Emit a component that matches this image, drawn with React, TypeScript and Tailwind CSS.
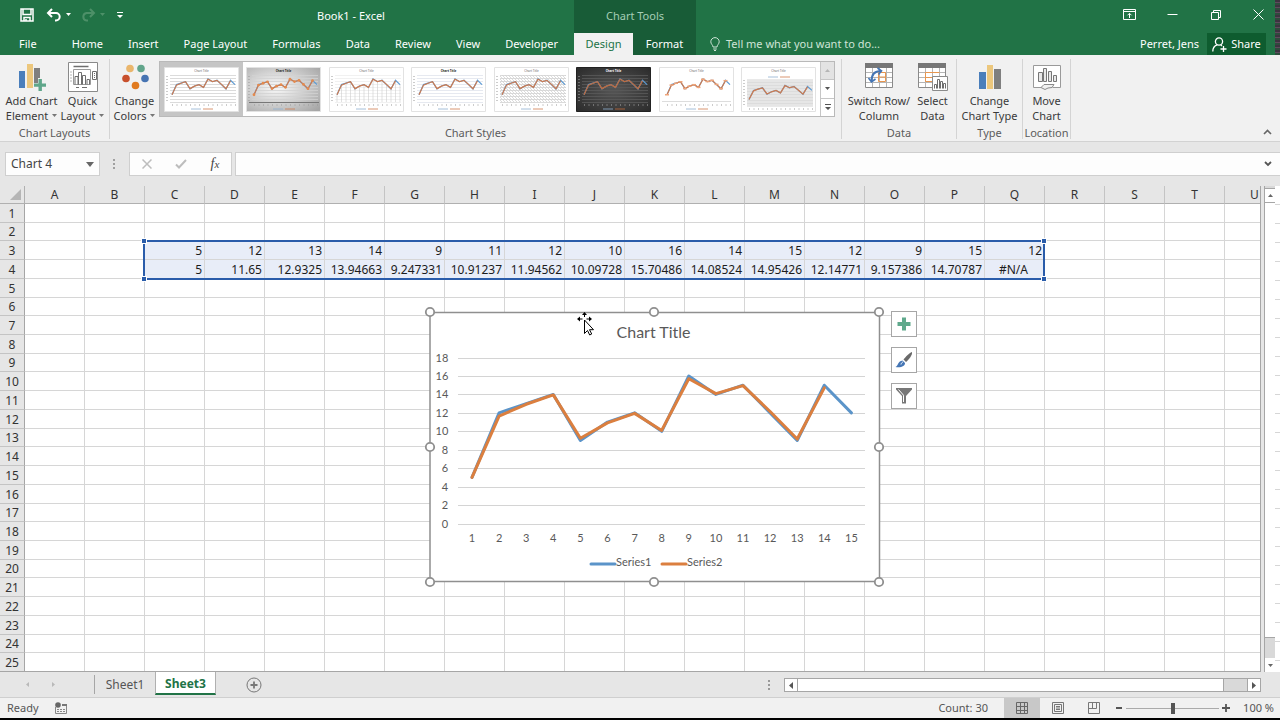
import { useState } from 'react'
import type { ReactNode } from 'react'

const columns = 'ABCDEFGHIJKLMNOPQRSTU'.split('')
const rows = Array.from({ length: 25 }, (_, i) => i + 1)

const tabs = ['Home', 'Insert', 'Page Layout', 'Formulas', 'Data', 'Review', 'View', 'Developer']

// values start in column C
const cells: Record<number, string[]> = {
  3: ['5', '12', '13', '14', '9', '11', '12', '10', '16', '14', '15', '12', '9', '15', '12'],
  4: ['5', '11.65', '12.9325', '13.94663', '9.247331', '10.91237', '11.94562', '10.09728', '15.70486', '14.08524', '14.95426', '12.14771', '9.157386', '14.70787', '#N/A'],
}

const series1 = cells[3].map(Number)
const series2 = cells[4].slice(0, 14).map(Number)

function toPoints(values: number[], x0: number, step: number, y0: number, unit: number) {
  return values.map((v, i) => `${x0 + i * step},${y0 - v * unit}`).join(' ')
}

function Caret({ className = '' }: { className?: string }) {
  return (
    <svg className={`inline-block shrink-0 ${className}`} width="5" height="3" viewBox="0 0 5 3">
      <path d="M0 0h5L2.5 3z" fill="currentColor" />
    </svg>
  )
}

/* ---------- Header ---------- */

function QuickAccess() {
  return (
    <div className="flex w-32 items-center pl-5 text-white">
      <button aria-label="Save">
        <svg width="14" height="14" viewBox="0 0 14 14" fill="none" stroke="currentColor" strokeWidth="1.5">
          <path d="M1 1h12v12H1z" />
          <path d="M3 1v5.500h8V1M4 13V9.500h6V13" />
          <path d="M6 11v2" />
        </svg>
      </button>
      <button aria-label="Undo" className="ml-3 flex items-center gap-1">
        <svg width="16" height="14" viewBox="0 0 16 14" fill="none" stroke="currentColor" strokeWidth="2">
          <path d="M2 5h8a3.700 3.700 0 0 1 0 7.400H9" />
          <path d="M6 1L2 5l4 4" />
        </svg>
        <Caret />
      </button>
      <button aria-label="Redo" className="ml-2.5 flex items-center gap-1 text-[#4d9068]">
        <svg width="15" height="14" viewBox="0 0 15 14" fill="none" stroke="currentColor" strokeWidth="2">
          <path d="M13 5H5.500a3.800 3.800 0 0 0 0 7.500H7" />
          <path d="M9 1l4 4-4 4" />
        </svg>
        <Caret />
      </button>
      <button aria-label="Customize Quick Access Toolbar" className="ml-3">
        <svg width="6" height="6" viewBox="0 0 6 6">
          <path d="M0 0h6v1H0zM0 3h6L3 6z" fill="currentColor" />
        </svg>
      </button>
    </div>
  )
}

function WindowButtons() {
  return (
    <div className="flex h-[33px] items-center justify-end gap-[30px] pr-2.5 pb-1 text-white">
      <button aria-label="Ribbon Display Options">
        <svg width="13" height="11" viewBox="0 0 13 11" fill="none" stroke="currentColor">
          <path d="M.5 .5h12v10H.5zM.5 2.500h12M6.500 9V4.500M4.500 6.300l2-2 2 2" />
        </svg>
      </button>
      <button aria-label="Minimize">
        <svg width="13" height="11" viewBox="0 0 13 11" stroke="currentColor">
          <path d="M1.500 5.500h10" />
        </svg>
      </button>
      <button aria-label="Restore">
        <svg width="13" height="11" viewBox="0 0 13 11" fill="none" stroke="currentColor">
          <path d="M2.500 3.500h7v7h-7zM4.500 3.500v-2h7v7h-2" />
        </svg>
      </button>
      <button aria-label="Close">
        <svg width="13" height="11" viewBox="0 0 13 11" stroke="currentColor">
          <path d="M1.500 .5l10 10M11.500 .5l-10 10" />
        </svg>
      </button>
    </div>
  )
}

function Header() {
  return (
    <header className="flex h-[55px] shrink-0 bg-[#217346] text-[11px] text-white">
      <div className="flex w-[574px] flex-col">
        <div className="flex h-[33px] items-stretch pb-1">
          <QuickAccess />
          <h1 className="flex flex-1 items-center justify-center pt-1">Book1 - Excel</h1>
        </div>
        <nav className="flex flex-1 items-center justify-between pr-4 pl-[19px]">
          <button className="mr-2.5">File</button>
          {tabs.map((t) => (
            <button key={t}>{t}</button>
          ))}
        </nav>
      </div>
      <div className="flex w-[122px] flex-col bg-[#185c37]">
        <div className="flex h-[33px] items-center justify-center text-[#a5cdb5]">Chart Tools</div>
        <div className="flex flex-1">
          <button className="w-[59px] bg-[#f1f1f1] text-[#217346]">Design</button>
          <button className="flex-1">Format</button>
        </div>
      </div>
      <div className="flex flex-1 flex-col">
        <WindowButtons />
        <div className="flex flex-1 items-stretch pr-[9px] pl-[14px]">
          <button className="flex items-center gap-[6px] text-[#cfe4d7]">
            <svg width="10" height="14" viewBox="0 0 10 14" fill="none" stroke="currentColor">
              <path d="M3 10C3 8 .8 7 .8 4.800a4.200 4.200 0 0 1 8.400 0C9.200 7 7 8 7 10zM3.200 12h3.600M4 13.500h2" />
            </svg>
            Tell me what you want to do...
          </button>
          <button className="mr-2 ml-auto">Perret, Jens</button>
          <button className="flex w-[59px] items-center justify-center gap-1 bg-[#0e5c2f]">
            <svg width="15" height="15" viewBox="0 0 15 15" fill="none" stroke="currentColor" strokeWidth="1.300">
              <circle cx="7" cy="4.500" r="3.600" />
              <path d="M.8 14.500c0-3.500 2-5.800 4.400-6.600M8.800 8l1.200 1M11.500 9v6M8.500 12h6" />
            </svg>
            Share
          </button>
        </div>
      </div>
      <div className="w-[5px] bg-[repeating-linear-gradient(#3c3340_0_2px,#5e4a5c_2px_3px,#2f4b3d_3px_5px)]" />
    </header>
  )
}

/* ---------- Ribbon ---------- */

function RibbonGroup({ label, className = '', children }: { label: string; className?: string; children: ReactNode }) {
  return (
    <section className={`flex flex-col border-r border-[#d4d4d4] ${className}`}>
      <div className="flex flex-1 justify-center">{children}</div>
      <div className="text-center text-[11px] leading-[12px] text-[#5c5c5c]">{label}</div>
    </section>
  )
}

function RibbonButton({ lines, caret, className = '', children }: { lines: [string, string]; caret?: boolean; className?: string; children: ReactNode }) {
  return (
    <button className={`flex flex-col items-center text-[11px] leading-[15px] whitespace-nowrap text-[#3a3a3a] ${className}`}>
      <span className="mt-0.5 flex h-8 items-center">{children}</span>
      <span>{lines[0]}</span>
      <span className="flex items-center gap-1">
        {lines[1]}
        {caret && <Caret className="text-[#777]" />}
      </span>
    </button>
  )
}

function AddElementIcon() {
  return (
    <svg width="28" height="28" viewBox="0 0 28 28">
      <path d="M1 8h6v17H1z" fill="#4a7ebb" />
      <path d="M9 1h6v24H9z" fill="#ecc77d" />
      <path d="M16 5h6v20h-6z" fill="#7f7f7f" />
      <path d="M15 20h5v-5h5v5h5v5h-5v4h-5v-4h-5z" fill="#f1f1f1" />
      <path d="M16 20.500h4.500V16h3.400v4.500H28v3.200h-4.100V28h-3.400v-4.300H16z" fill="#5fa68a" />
    </svg>
  )
}

function QuickLayoutIcon() {
  return (
    <svg width="30" height="30" viewBox="0 0 30 30" fill="none" stroke="#6e6e6e">
      <path d="M.5 .5h29v29H.5z" fill="#fff" stroke="#8a8a8a" />
      <path d="M5.500 4.500h15" strokeWidth="1.500" />
      <path d="M5.500 7.500h17v15h-17z" stroke="#9a9a9a" />
      <path d="M7 22.500v-8h3v8M10.500 22.500v-12h3v12M14.500 22.500v-9h3v9M19 22.500v-5h2.500v5" />
      <path d="M24.500 9.500h4v8h-4zM26.500 11v1M26.500 13v1M26.500 15v1" />
      <path d="M2.500 10h1M2.500 13h1M2.500 16h1M2.500 19h1M8 25.500h3M14 25.500h5" />
    </svg>
  )
}

function ColorsIcon() {
  return (
    <svg width="28" height="26" viewBox="0 0 28 26">
      <circle cx="9" cy="4.500" r="3.800" fill="#eab66c" />
      <circle cx="20" cy="4.500" r="3.800" fill="#62a58b" />
      <circle cx="5" cy="14.500" r="3.800" fill="#c8502d" />
      <circle cx="24" cy="14.500" r="3.800" fill="#4674b2" />
      <circle cx="14.500" cy="21.500" r="3.800" fill="#e07a1f" />
    </svg>
  )
}

function TableBase() {
  return (
    <>
      <path d="M.5 .5h27v24H.5z" fill="#fff" stroke="#8a8a8a" />
      <path d="M0 0h28v5H0z" fill="#777" />
      <path d="M1 9.500h26M1 14.500h26M1 19.500h26M7.500 5v19M14.500 5v19M21.500 5v19" stroke="#b5b5b5" fill="none" />
    </>
  )
}

function SwitchIcon() {
  return (
    <svg width="28" height="28" viewBox="0 0 28 28" fill="none">
      <TableBase />
      <path d="M13.500 9.500h7v9h-7zM13.500 14h7" stroke="#e8964f" />
      <path d="M6.500 18C6.500 11 10 8 16 8" stroke="#4576b5" strokeWidth="2" />
      <path d="M12.500 5l4 3-3 3.500M3.500 15l3 4 4-3" stroke="#4576b5" strokeWidth="1.600" />
    </svg>
  )
}

function SelectDataIcon() {
  return (
    <svg width="30" height="28" viewBox="0 0 30 28" fill="none">
      <TableBase />
      <path d="M7.500 9.500h14M7.500 14.500h7M7.500 9.500v9h7" stroke="#e8964f" />
      <path d="M14.500 13.500h15v14h-15z" fill="#fff" stroke="#8a8a8a" />
      <path d="M16.500 25.500v-4h2v4M19.500 25.500v-9h2v9M22.500 25.500v-7h2v7M25.500 25.500v-5h2v5" stroke="#6e6e6e" />
    </svg>
  )
}

function ChartTypeIcon() {
  return (
    <svg width="22" height="26" viewBox="0 0 22 26">
      <path d="M0 8h7v17H0z" fill="#4a7ebb" />
      <path d="M8 1h6v24H8z" fill="#ecc77d" />
      <path d="M15 5h7v20h-7z" fill="#7f7f7f" />
    </svg>
  )
}

function MoveChartIcon() {
  return (
    <svg width="28" height="26" viewBox="0 0 28 26" fill="none" stroke="#9a9a9a">
      <path d="M8 23.500H.5V1.500h27v22h-8" fill="#fff" />
      <path d="M5.500 17.500v-9h4v9zM10.500 17.500v-13h3v13zM15.500 17.500v-10h3v10zM20.500 17.500v-6h3v6z" stroke="#777" fill="#e8e8e8" />
      <path d="M8 23.500l3-3h10l-2 3-4 .5-3 1.500z" fill="#f1f1f1" stroke="#8a8a8a" />
    </svg>
  )
}

type Thumb = 'plain' | 'gradient' | 'drops' | 'bold' | 'hatch' | 'dark' | 'nogrid' | 'shaded'
const thumbs: Thumb[] = ['plain', 'gradient', 'drops', 'bold', 'hatch', 'dark', 'nogrid', 'shaded']

function StyleThumb({ kind }: { kind: Thumb }) {
  const dark = kind === 'dark'
  const shift = kind === 'shaded' ? 4 : 0
  const bg = dark ? 'url(#thumbDark)' : kind === 'gradient' ? 'url(#thumbGrad)' : '#fff'
  const line = dark ? '#c0693a' : '#cf7b4f'
  const ink = dark ? '#aaa' : '#999'
  const grid = dark ? '#5a5a5a' : kind === 'bold' ? '#dfe3ec' : kind === 'drops' ? '#eee' : '#d2d2d2'
  const base = 35 + shift
  const unit = kind === 'shaded' ? 1.3 : 1.45
  const legendY = kind === 'shaded' ? 10 : 42
  return (
    <svg width="75" height="45" viewBox="0 0 75 45" fill="none">
      <defs>
        <radialGradient id="thumbGrad" cx=".4" cy=".45" r=".75">
          <stop offset=".1" stopColor="#f2f2f2" />
          <stop offset="1" stopColor="#a6a6a6" />
        </radialGradient>
        <radialGradient id="thumbDark" cx=".5" cy=".5" r=".7">
          <stop offset=".1" stopColor="#525252" />
          <stop offset="1" stopColor="#2b2b2b" />
        </radialGradient>
        <pattern id="thumbHatch" width="3" height="3" patternUnits="userSpaceOnUse">
          <path d="M0 0l3 3" stroke="#c4c4c4" strokeWidth=".6" />
        </pattern>
      </defs>
      <path d="M.5 .5h74v44H.5z" fill={bg} stroke={dark ? '#222' : '#e2e2e2'} />
      {kind === 'hatch' && <path d="M6 8h66v27H6z" fill="url(#thumbHatch)" />}
      {kind === 'shaded' && <path d="M6 13h66v26H6z" fill="#e6e6e6" />}
      <text
        x="37.500"
        y="5.300"
        fontSize="3"
        textAnchor="middle"
        fill={dark ? '#fff' : kind === 'bold' || kind === 'gradient' ? '#222' : '#666'}
        fontWeight={dark || kind === 'bold' || kind === 'gradient' ? 700 : 400}
      >
        Chart Title
      </text>
      {kind !== 'nogrid' &&
        Array.from({ length: 10 }, (_, i) => (
          <path key={i} d={`M6 ${base + 0.5 - i * 3}h66`} stroke={grid} strokeWidth={kind === 'shaded' ? 0.5 : 0.8} />
        ))}
      {kind === 'gradient' && <path d="M3 35.500h70" stroke="#777" />}
      {kind === 'nogrid' && <path d="M3 34.500h69" stroke="#ddd" />}
      {kind === 'drops' &&
        series1.map((v, i) => <path key={i} d={`M${8 + i * 4.5} ${base}V${base - v * unit}`} stroke="#ccc" strokeWidth=".6" />)}
      {kind !== 'nogrid' && <path d={`M3 ${9 + shift}V${base + 1}`} stroke={ink} strokeWidth="1" strokeDasharray="1 2" />}
      <path d={`M8 ${base + 3}h64`} stroke={ink} strokeWidth="1" strokeDasharray="1 3.500" />
      <path d={`M27 ${legendY}h10`} stroke="#8fb0d0" strokeWidth=".8" />
      <path d={`M39 ${legendY}h10`} stroke={line} strokeWidth=".8" />
      <polyline points={toPoints(series1, 8, 4.5, base, unit)} stroke="#5b9bd5" strokeWidth="1.200" />
      <polyline points={toPoints(series2, 8, 4.5, base, unit)} stroke={line} strokeWidth="1.200" />
      {kind === 'gradient' &&
        series2.map((v, i) => <circle key={i} cx={8 + i * 4.5} cy={base - v * unit} r="1.400" fill="#e58a4d" />)}
      {kind === 'nogrid' &&
        series2.map((v, i) => <path key={i} d={`M${6 + i * 4.5} ${base - v * unit}h4`} stroke="#eea57b" strokeWidth="1.500" />)}
    </svg>
  )
}

function Gallery() {
  const [selected, setSelected] = useState<Thumb>('plain')
  return (
    <div className="mt-0.5 flex h-14 border border-[#b9b9b9] bg-white">
      <div className="flex flex-1">
        {thumbs.map((t) => (
          <button
            key={t}
            aria-label={`Style ${t}`}
            onClick={() => setSelected(t)}
            className={`flex flex-1 items-center justify-center ${t === selected ? 'bg-[#c5c5c5]' : ''}`}
          >
            <StyleThumb kind={t} />
          </button>
        ))}
      </div>
      <div className="flex w-3.5 flex-col border-l border-[#c6c6c6] text-[#555]">
        <button aria-label="Previous styles" className="flex flex-1 items-center justify-center bg-[#e3e3e3] text-[#b5b5b5]">
          <Caret className="rotate-180" />
        </button>
        <button aria-label="Next styles" className="flex flex-1 items-center justify-center border-t border-[#c6c6c6]">
          <Caret />
        </button>
        <button aria-label="More styles" className="flex flex-1 items-center justify-center border-t border-[#c6c6c6]">
          <svg width="6" height="6" viewBox="0 0 6 6">
            <path d="M0 0h6v1H0zM0 3h6L3 6z" fill="currentColor" />
          </svg>
        </button>
      </div>
    </div>
  )
}

function Ribbon() {
  return (
    <div className="flex h-[87px] shrink-0 border-b border-[#d2d2d2] bg-[#f1f1f1] pt-1 pb-0.5">
      <RibbonGroup label="Chart Layouts" className="w-[110px]">
        <RibbonButton lines={['Add Chart', 'Element']} caret className="w-[56px]">
          <AddElementIcon />
        </RibbonButton>
        <RibbonButton lines={['Quick', 'Layout']} caret className="w-[46px]">
          <QuickLayoutIcon />
        </RibbonButton>
      </RibbonGroup>
      <RibbonGroup label="Chart Styles" className="w-[732px]">
        <RibbonButton lines={['Change', 'Colors']} caret className="w-[49px]">
          <ColorsIcon />
        </RibbonButton>
        <div className="flex-1 pr-1.5">
          <Gallery />
        </div>
      </RibbonGroup>
      <RibbonGroup label="Data" className="w-[115px]">
        <RibbonButton lines={['Switch Row/', 'Column']} className="w-[67px]">
          <SwitchIcon />
        </RibbonButton>
        <RibbonButton lines={['Select', 'Data']} className="w-[40px]">
          <SelectDataIcon />
        </RibbonButton>
      </RibbonGroup>
      <RibbonGroup label="Type" className="w-[66px]">
        <RibbonButton lines={['Change', 'Chart Type']}>
          <ChartTypeIcon />
        </RibbonButton>
      </RibbonGroup>
      <RibbonGroup label="Location" className="w-[48px]">
        <RibbonButton lines={['Move', 'Chart']}>
          <MoveChartIcon />
        </RibbonButton>
      </RibbonGroup>
      <button aria-label="Collapse the Ribbon" className="mr-2 ml-auto self-end pb-1">
        <svg width="9" height="6" viewBox="0 0 9 6" fill="none" stroke="#666" strokeWidth="1.600">
          <path d="M1 5l3.500-3.500L8 5" />
        </svg>
      </button>
    </div>
  )
}

/* ---------- Formula bar ---------- */

function FormulaBar() {
  return (
    <div className="flex h-11 shrink-0 items-center bg-[#e6e6e6] pl-[5px]">
      <div className="flex h-6 w-[95px] items-center border border-[#cfcfcf] bg-[#fdfdfd] pr-[5px] pl-[5px]">
        <input aria-label="Name Box" defaultValue="Chart 4" className="w-0 flex-1 bg-transparent text-[12px] text-[#444] outline-none" />
        <button aria-label="Name Box list" className="flex text-[#666]">
          <svg width="8" height="5" viewBox="0 0 8 5">
            <path d="M0 0h8L4 5z" fill="currentColor" />
          </svg>
        </button>
      </div>
      <svg className="mx-[13px]" width="3" height="12" viewBox="0 0 3 12" fill="#a0a0a0">
        <path d="M0 1h2v2H0zM0 5h2v2H0zM0 9h2v2H0z" />
      </svg>
      <div className="flex h-6 w-[103px] items-center justify-around border border-[#cfcfcf] bg-[#fdfdfd]">
        <button aria-label="Cancel">
          <svg width="10" height="10" viewBox="0 0 10 10" stroke="#bdbdbd" strokeWidth="1.500">
            <path d="M.5 .5l9 9M9.500 .5l-9 9" />
          </svg>
        </button>
        <button aria-label="Enter">
          <svg width="12" height="10" viewBox="0 0 12 10" fill="none" stroke="#bdbdbd" strokeWidth="2">
            <path d="M1 5.500L4 8.500 11 1" />
          </svg>
        </button>
        <button aria-label="Insert Function" className="font-['Liberation_Serif',serif] text-[14px] leading-none text-[#444] italic">
          f<span className="text-[11px]">x</span>
        </button>
      </div>
      <div className="ml-[3px] flex h-6 flex-1 items-center border border-r-0 border-[#cfcfcf] bg-[#fdfdfd] pr-2">
        <input aria-label="Formula Bar" className="min-w-0 flex-1 bg-transparent px-1 outline-none" />
        <button aria-label="Expand Formula Bar">
          <svg width="8" height="6" viewBox="0 0 8 6" fill="none" stroke="#555" strokeWidth="1.800">
            <path d="M1 1l3 3 3-3" />
          </svg>
        </button>
      </div>
    </div>
  )
}

/* ---------- Worksheet ---------- */

function Grid() {
  return (
    <table className="h-[calc(100%+1px)] w-[1285px] table-fixed border-separate border-spacing-0 font-['Noto_Sans',sans-serif] text-[12px] leading-4">
      <colgroup>
        <col className="w-[25px]" />
        {columns.map((c) => (
          <col key={c} className="w-[60px]" />
        ))}
      </colgroup>
      <thead>
        <tr className="h-[18px] bg-[#e6e6e6] text-[#333]">
          <th className="border-r border-b border-[#b0b0b0] p-0">
            <svg className="ml-2.5 block" width="11" height="11" viewBox="0 0 11 11">
              <path d="M11 0v11H0z" fill="#b5b5b5" />
            </svg>
          </th>
          {columns.map((c) => (
            <th key={c} className="border-r border-b border-[#b0b0b0] border-r-[#c4c4c4] p-0 font-normal">
              {c}
            </th>
          ))}
        </tr>
      </thead>
      <tbody>
        {rows.map((r) => (
          <tr key={r} className="align-bottom">
            <th className="border-r border-b border-[#c4c4c4] border-r-[#a6a6a6] bg-[#e6e6e6] p-0 font-normal text-[#333]">{r}</th>
            {columns.map((c, i) => {
              const value = cells[r]?.[i - 2]
              return (
                <td
                  key={c}
                  className={`border-r border-b border-[#d6d6d6] p-0 pr-0.5 text-[#1c1c1c] ${value ? 'bg-[#e8edf8]' : 'bg-white'} ${value === '#N/A' ? 'text-center' : 'text-right'}`}
                >
                  {value}
                </td>
              )
            })}
          </tr>
        ))}
      </tbody>
    </table>
  )
}

function SelectionFrame() {
  return (
    <div className="pointer-events-none absolute top-[54px] left-[143px] h-10 w-[902px] border-2 border-[#2a5caa]">
      <i className="absolute -top-1 -left-1 size-[6px] border border-white bg-[#2a5caa]" />
      <i className="absolute -top-1 -right-1 size-[6px] border border-white bg-[#2a5caa]" />
      <i className="absolute -bottom-1 -left-1 size-[6px] border border-white bg-[#2a5caa]" />
      <i className="absolute -right-1 -bottom-1 size-[6px] border border-white bg-[#2a5caa]" />
    </div>
  )
}

function ChartObject() {
  const base = 211.5
  const unit = 9.22
  return (
    <div className="absolute top-[118px] left-[422px] flex gap-1">
      {/* 8px margin round the frame leaves room for the handles */}
      <svg width="465" height="286" viewBox="-8 -8 465 286" fill="none" fontSize="11">
        <path d="M0 .5h449.500v269H0z" fill="#fff" stroke="#8f8f8f" strokeWidth="1.500" />
        <text x="223.500" y="26" fontSize="16" textAnchor="middle" fill="#595959">
          Chart Title
        </text>
        {Array.from({ length: 10 }, (_, i) => {
          const y = Math.round(base - i * 2 * unit)
          return (
            <g key={i}>
              <path d={`M28 ${y + 0.5}H435`} stroke="#d4d4d4" />
              <text x={i > 4 ? 12 : 15} textAnchor="middle" y={y + 4} fill="#595959">
                {i * 2}
              </text>
            </g>
          )
        })}
        {series1.map((_, i) => (
          <text key={i} x={42 + i * 27.1} y="230" textAnchor="middle" fill="#595959">
            {i + 1}
          </text>
        ))}
        <g strokeWidth="3" strokeLinecap="round" strokeLinejoin="round">
          <polyline points={toPoints(series1, 42, 27.1, base, unit)} stroke="#5b94c9" />
          <polyline points={toPoints(series2, 42, 27.1, base, unit)} stroke="#db7f3f" />
          <path d="M161 252h24" stroke="#5b94c9" />
          <path d="M232 252h24" stroke="#db7f3f" />
        </g>
        <text x="186" y="254" fill="#595959">Series1</text>
        <text x="257" y="254" fill="#595959">Series2</text>
        {[0, 135, 270].map((y) =>
          [0, 224, 449].map((x) =>
            x === 224 && y === 135 ? null : <circle key={`${x}-${y}`} cx={x} cy={y} r="4.200" fill="#fff" stroke="#8f8f8f" strokeWidth="1.800" />,
          ),
        )}
        {/* move pointer */}
        <g transform="translate(147 0)">
          <path d="M7.500 1v12M1 7h14" stroke="#fff" strokeWidth="2" />
          <path d="M7.500 0L5 3h2v2h1V3h2zM0 7l3-2.500V6.500h2.500v1H3v2zM15 7l-3-2.500V6.500h-2.500v1H12v2z" fill="#000" />
          <path d="M7.500 8v13.500l3-3 2.200 4.500 2-1-2.200-4.300h4z" fill="#fff" stroke="#000" />
        </g>
      </svg>
      <div className="mt-[7px] flex flex-col gap-2.5">
        <button aria-label="Chart Elements" className="flex size-[26px] items-center justify-center border border-[#a6a6a6] bg-white">
          <svg width="14" height="14" viewBox="0 0 14 14">
            <path d="M5 .5h4V5h4.500v4H9v4.500H5V9H.5V5H5z" fill="#5fa98c" />
          </svg>
        </button>
        <button aria-label="Chart Styles" className="flex size-[26px] items-center justify-center border border-[#a6a6a6] bg-white">
          <svg width="18" height="18" viewBox="0 0 18 18">
            <path d="M17 1c.6 3-3 7.500-6 10L8.500 8.500C10.500 6 14 2 17 1z" fill="#6a6a6a" />
            <path d="M7.500 9.500L10 12c.2 3-4 5-9.500 4C3 15 3 10 7.500 9.500z" fill="#4576b5" />
            <path d="M6 13.500c.3-1.500 1.200-2.300 2-2.500" stroke="#fff" fill="none" />
          </svg>
        </button>
        <button aria-label="Chart Filters" className="flex size-[26px] items-center justify-center border border-[#a6a6a6] bg-white">
          <svg width="18" height="16" viewBox="0 0 18 16">
            <path d="M1 0h16v1.500L11 8v7.500H7V8L1 1.500z" fill="#777" />
            <path d="M3.500 1.500L8.500 7.200V14" stroke="#fff" fill="none" />
          </svg>
        </button>
      </div>
    </div>
  )
}

function Sheet() {
  return (
    <main className="flex min-h-0 flex-1 bg-[#e6e6e6] font-[Lato,sans-serif]">
      <div className="relative min-w-0 flex-1 overflow-hidden border-r border-b border-[#a6a6a6]">
        <Grid />
        <SelectionFrame />
        <ChartObject />
      </div>
      <div className="ml-[3px] flex w-[11px] flex-col border-l border-[#a6a6a6] bg-[#d9d9d9] pt-0.5">
        <button aria-label="Scroll up" className="flex h-[15px] items-center justify-center border-y border-[#a6a6a6] bg-white text-[#666]">
          <Caret className="rotate-180" />
        </button>
        <div className="flex-1 border-b border-[#a6a6a6] bg-white" />
        <div className="h-5" />
        <button aria-label="Scroll down" className="flex h-[14px] items-center justify-center bg-white text-[#666]">
          <Caret />
        </button>
      </div>
      <div className="w-[5px] bg-[repeating-linear-gradient(#fff_0_18px,#d6d6d6_18px_19px)]" />
    </main>
  )
}

/* ---------- Footer ---------- */

function SheetTabs() {
  return (
    <div className="flex h-[26px] shrink-0 border-b border-[#cfcfcf] bg-[#e6e6e6] text-[12px] text-[#555]">
      <div className="my-[3px] flex w-[95px] items-center border-r border-[#a6a6a6] pl-[25px] text-[#b9b9b9]">
        <button aria-label="Previous sheet" className="flex w-[26px]">
          <Caret className="rotate-90" />
        </button>
        <button aria-label="Next sheet" className="flex">
          <Caret className="-rotate-90" />
        </button>
      </div>
      <button className="w-[60px]">Sheet1</button>
      <button className="-mt-px mb-0.5 w-[61px] border-x border-b-2 border-x-[#b0b0b0] border-b-[#217346] bg-white pt-1 font-bold text-[#217346]">
        Sheet3
      </button>
      <button aria-label="New sheet" className="ml-[30px]">
        <svg width="16" height="16" viewBox="0 0 16 16" fill="none" stroke="#777">
          <circle cx="8" cy="8" r="7" />
          <path d="M8 4.500v7M4.500 8h7" strokeWidth="1.800" />
        </svg>
      </button>
      <div className="ml-auto flex w-[512px] items-center pt-px">
        <svg width="3" height="11" viewBox="0 0 3 11" fill="#999">
          <path d="M0 0h2v2H0zM0 4h2v2H0zM0 8h2v2H0z" />
        </svg>
        <div className="mr-[19px] ml-[13px] flex h-3.5 flex-1 border border-[#a6a6a6] bg-[#d9d9d9] text-[#555]">
          <button aria-label="Scroll left" className="flex w-[13px] items-center justify-center border-r border-[#a6a6a6] bg-white">
            <svg width="4" height="7" viewBox="0 0 4 7">
              <path d="M4 0v7L0 3.500z" fill="currentColor" />
            </svg>
          </button>
          <div className="flex-1 border-r border-[#a6a6a6] bg-white" />
          <div className="w-[23px]" />
          <button aria-label="Scroll right" className="flex w-[13px] items-center justify-center border-l border-[#a6a6a6] bg-white">
            <svg width="4" height="7" viewBox="0 0 4 7">
              <path d="M0 0v7l4-3.500z" fill="currentColor" />
            </svg>
          </button>
        </div>
      </div>
    </div>
  )
}

function StatusBar() {
  const [zoom, setZoom] = useState(100)
  return (
    <footer className="flex h-[22px] shrink-0 items-stretch border-b-2 border-black bg-[#f1f1f1] text-[11px] text-[#555]">
      <span className="flex items-center pl-[7px]">Ready</span>
      <button aria-label="Macro recording" className="ml-4">
        <svg width="12" height="12" viewBox="0 0 12 12" fill="none">
          <path d="M.5 5v6.500h11v-9H7" stroke="#888" />
          <path d="M7 2h5v2H7z" fill="#777" />
          <path d="M2 7.500h8M2 9.500h8" stroke="#888" strokeDasharray="2 1" />
          <circle cx="3" cy="3" r="2.800" fill="#666" />
        </svg>
      </button>
      <span className="mr-4 ml-auto flex items-center">Count: 30</span>
      <button aria-label="Normal" className="flex w-9 items-center justify-center bg-[#c8c8c8]">
        <svg width="12" height="12" viewBox="0 0 12 12" fill="none" stroke="#666">
          <path d="M.5 .5h11v11H.5zM.5 4.500h11M.5 8.500h11M4.500 .5v11M8.500 .5v11" />
        </svg>
      </button>
      <button aria-label="Page Layout view" className="flex w-9 items-center justify-center">
        <svg width="12" height="12" viewBox="0 0 12 12" fill="none" stroke="#777">
          <path d="M.5 .5h11v11H.5zM2.500 2.500h7v7h-7zM4 4.500h4M4 6h4M4 7.500h4" />
        </svg>
      </button>
      <button aria-label="Page Break Preview" className="flex w-9 items-center justify-center">
        <svg width="12" height="12" viewBox="0 0 12 12" fill="none" stroke="#777">
          <path d="M.5 .5h11v11H.5zM4.500 .5v6M8.500 .5v6h-8" />
        </svg>
      </button>
      <button aria-label="Zoom out" className="ml-[3px] flex items-center">
        <svg width="8" height="8" viewBox="0 0 8 8" stroke="#555" strokeWidth="2">
          <path d="M1 4h6" />
        </svg>
      </button>
      <input
        type="range"
        aria-label="Zoom"
        min={0}
        max={200}
        value={zoom}
        onChange={(e) => setZoom(Number(e.target.value))}
        className="mx-[3px] h-full w-[93px] appearance-none bg-[linear-gradient(#aaa,#aaa)] bg-[length:100%_1px] bg-center bg-no-repeat [&::-webkit-slider-thumb]:h-[11px] [&::-webkit-slider-thumb]:w-1 [&::-webkit-slider-thumb]:appearance-none [&::-webkit-slider-thumb]:bg-[#555]"
      />
      <button aria-label="Zoom in" className="flex items-center">
        <svg width="8" height="8" viewBox="0 0 8 8" stroke="#555" strokeWidth="1.800">
          <path d="M0 4h8M4 0v8" />
        </svg>
      </button>
      <span className="flex w-[50px] items-center justify-end pr-[6px]">{zoom} %</span>
    </footer>
  )
}

export default function App() {
  return (
    <div className="flex h-screen flex-col overflow-hidden bg-[#e6e6e6] font-['Noto_Sans',sans-serif] text-[11px]">
      <Header />
      <Ribbon />
      <FormulaBar />
      <Sheet />
      <SheetTabs />
      <StatusBar />
    </div>
  )
}
